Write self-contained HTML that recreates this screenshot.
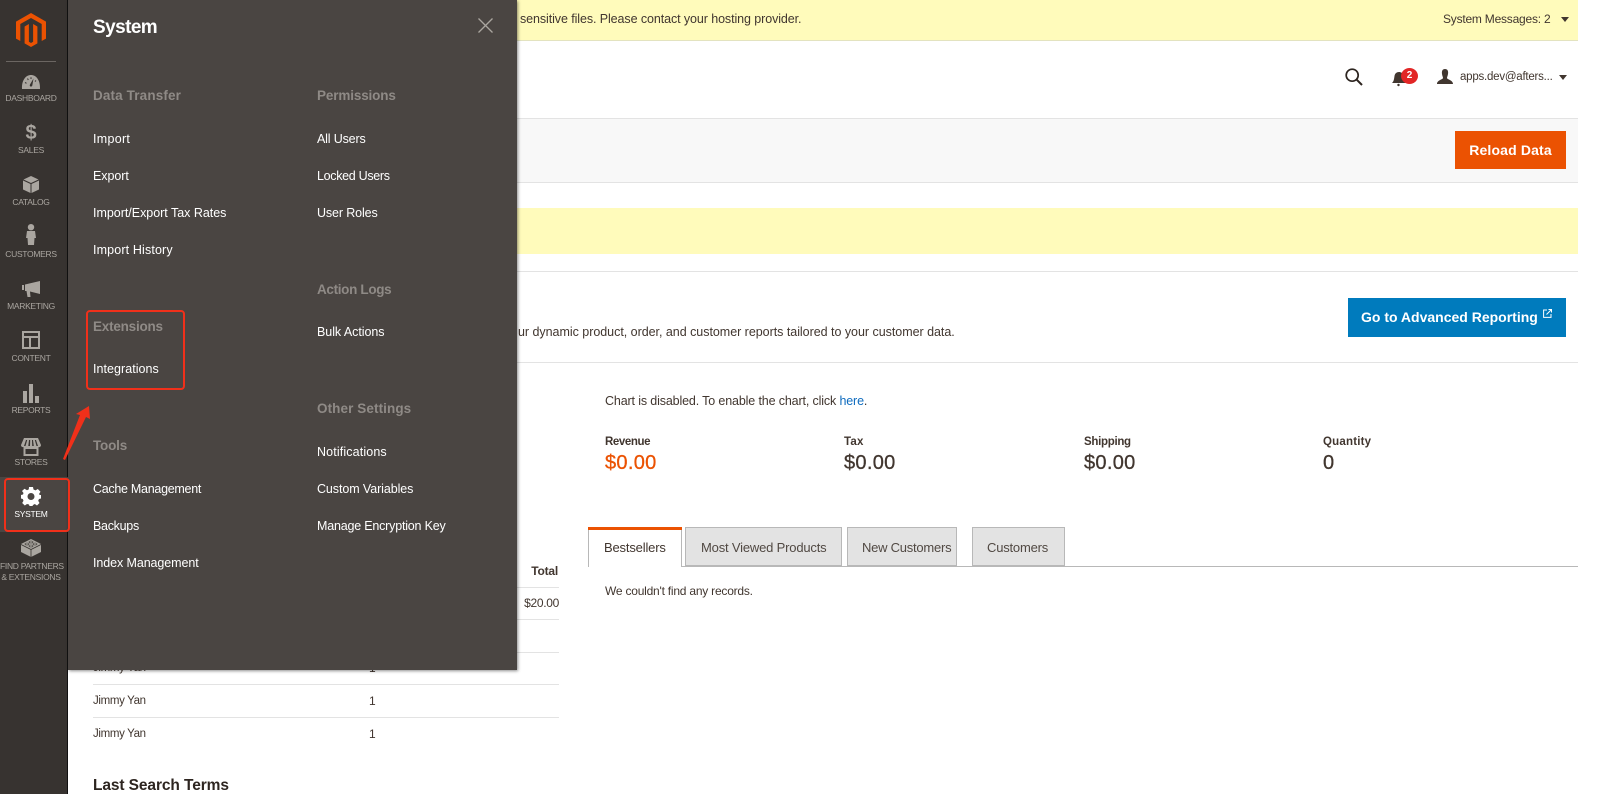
<!DOCTYPE html>
<html lang="en"><head><meta charset="utf-8"><title>Magento Admin</title>
<style>
html,body{margin:0;padding:0;background:#fff}
body{width:1600px;height:794px;overflow:hidden;position:relative;font-family:"Liberation Sans",sans-serif;color:#41362f}
.b{position:absolute}
.t{position:absolute;white-space:nowrap;line-height:0;font-size:12.5px;letter-spacing:.2px}
.n{font-size:8.5px;color:#aaa6a0;letter-spacing:-.3px;left:0;width:62px;text-align:center}
.m{font-size:12.5px;color:#fff}
.h{font-size:13.5px;font-weight:bold;color:#8f8a86}
.l{font-weight:bold;font-size:11.5px}
.v{font-size:20px;letter-spacing:.3px;-webkit-text-stroke:.3px currentColor}
.tab{position:absolute;top:527px;height:37px;background:#e3e3e3;border:1px solid #b8b8b8;border-bottom:2px solid #b8b8b8;box-sizing:content-box}
svg{position:absolute;overflow:visible}
.i{fill:#aaa6a0}
</style></head><body>

<!-- page -->
<div class="b" style="left:68px;top:0;width:1510px;height:40px;background:#fffbbb;border-bottom:1px solid #e3e3c0"></div>
<div class="t" style="left:520px;top:19px;letter-spacing:-.09px">sensitive files. Please contact your hosting provider.</div>
<div class="t" style="left:1443px;top:19px;font-size:12px;letter-spacing:-.22px">System Messages: 2</div>
<svg style="left:1561px;top:17px" width="8" height="5"><path d="M0 0H8L4 5Z" fill="#41362f"/></svg>

<svg style="left:1345px;top:68px" width="18" height="18" viewBox="0 0 18 18"><circle cx="7.2" cy="7.2" r="6" fill="none" stroke="#2d2520" stroke-width="1.7"/><path d="M11.6 11.6L17 17" stroke="#2d2520" stroke-width="2"/></svg>
<svg style="left:1392px;top:71px" width="14" height="15" viewBox="0 0 14 15"><path d="M0 12C2 10 2 8 2.500 5C3 2 5 1 7 1S11 2 11.500 5C12 8 12 10 14 12Z" fill="#41362f"/><circle cx="6.500" cy="14" r="1.200" fill="#41362f"/></svg>
<div class="b" style="left:1401px;top:68px;width:17px;height:16px;border-radius:50%;background:#e22626"></div>
<div class="t" style="left:1401px;width:17px;text-align:center;top:76px;font-size:10px;font-weight:bold;color:#fff;letter-spacing:0">2</div>
<svg style="left:1437px;top:69px" width="16" height="15" viewBox="0 0 16 15"><path d="M8 0C10.500 0 11.500 2 11 5C10.700 7 10 8 10 9C10 10.500 16 11 16 15H0C0 11 6 10.500 6 9C6 8 5.300 7 5 5C4.500 2 5.500 0 8 0Z" fill="#41362f"/></svg>
<div class="t" style="left:1460px;top:77px;letter-spacing:-.23px;font-size:11.500px">apps.dev@afters...</div>
<svg style="left:1559px;top:75px" width="8" height="5"><path d="M0 0H8L4 5Z" fill="#41362f"/></svg>

<div class="b" style="left:68px;top:118px;width:1510px;height:63px;background:#f8f8f8;border-top:1px solid #e3e3e3;border-bottom:1px solid #e3e3e3"></div>
<div class="b" style="left:1455px;top:131px;width:111px;height:38px;background:#eb5202"></div>
<div class="t" style="left:1455px;width:111px;text-align:center;top:150px;font-size:14px;font-weight:bold;color:#fff;letter-spacing:.15px">Reload Data</div>

<div class="b" style="left:68px;top:208px;width:1510px;height:46px;background:#fffbbb"></div>
<div class="b" style="left:68px;top:271px;width:1510px;height:1px;background:#e3e3e3"></div>
<div class="t" style="left:518px;top:332px;letter-spacing:-.03px">ur dynamic product, order, and customer reports tailored to your customer data.</div>
<div class="b" style="left:1348px;top:298px;width:218px;height:39px;background:#007bbd"></div>
<div class="t" style="left:1361px;top:317px;font-size:14px;font-weight:bold;color:#fff;letter-spacing:0">Go to Advanced Reporting</div>
<svg style="left:1543px;top:309px" width="9" height="9" viewBox="0 0 9 9"><path d="M4 1H.6V8.400H8V5M3.500 5.500L8.500.5M5.500.5H8.500V3.500" fill="none" stroke="#fff" stroke-width="1"/></svg>
<div class="b" style="left:68px;top:362px;width:1510px;height:1px;background:#e3e3e3"></div>

<div class="t" style="left:605px;top:401px;letter-spacing:-.14px">Chart is disabled. To enable the chart, click <span style="color:#0f6cbf">here</span>.</div>
<div class="t l" style="left:605px;top:442px;letter-spacing:-.4px">Revenue</div>
<div class="t l" style="left:844px;top:442px;letter-spacing:.2px">Tax</div>
<div class="t l" style="left:1084px;top:442px;letter-spacing:-.3px">Shipping</div>
<div class="t l" style="left:1323px;top:442px;letter-spacing:.2px">Quantity</div>
<div class="t v" style="left:605px;top:463px;color:#eb5202">$0.00</div>
<div class="t v" style="left:844px;top:463px;">$0.00</div>
<div class="t v" style="left:1084px;top:463px;">$0.00</div>
<div class="t v" style="left:1323px;top:463px;">0</div>

<div class="b" style="left:588px;top:566px;width:990px;height:1px;background:#b8b8b8"></div>
<div class="b" style="left:588px;top:527px;width:92px;height:40px;background:#fff;border-left:1px solid #b8b8b8;border-right:1px solid #b8b8b8;box-sizing:content-box"></div>
<div class="b" style="left:588px;top:527px;width:94px;height:3px;background:#eb5202"></div>
<div class="t" style="left:604px;top:548px;font-size:13px;letter-spacing:-.17px">Bestsellers</div>
<div class="tab" style="left:685px;width:155px"></div>
<div class="t" style="left:701px;top:548px;font-size:13px;color:#514943;letter-spacing:-.18px">Most Viewed Products</div>
<div class="tab" style="left:847px;width:108px"></div>
<div class="t" style="left:862px;top:548px;font-size:13px;color:#514943;letter-spacing:-.24px">New Customers</div>
<div class="tab" style="left:972px;width:91px"></div>
<div class="t" style="left:987px;top:548px;font-size:13px;color:#514943;letter-spacing:-.2px">Customers</div>
<div class="t" style="left:605px;top:591px;font-size:12px;letter-spacing:-.22px">We couldn't find any records.</div>

<div class="t" style="right:1042px;top:571px;font-size:12px;font-weight:bold;letter-spacing:-.2px">Total</div>
<div class="t" style="right:1041px;top:603px;font-size:12px;letter-spacing:-.3px">$20.00</div>
<div class="b" style="left:93px;top:587px;width:466px;height:1px;background:#e3e3e3"></div>
<div class="b" style="left:93px;top:619px;width:466px;height:1px;background:#e3e3e3"></div>
<div class="b" style="left:93px;top:652px;width:466px;height:1px;background:#e3e3e3"></div>
<div class="b" style="left:93px;top:684px;width:466px;height:1px;background:#e3e3e3"></div>
<div class="b" style="left:93px;top:717px;width:466px;height:1px;background:#e3e3e3"></div>
<div class="t" style="left:93px;top:668px;font-size:11.500px;letter-spacing:-.35px">Jimmy Yan</div>
<div class="t" style="left:369px;top:668px;font-size:12px;">1</div>
<div class="t" style="left:93px;top:701px;font-size:11.500px;letter-spacing:-.35px">Jimmy Yan</div>
<div class="t" style="left:369px;top:701px;font-size:12px;">1</div>
<div class="t" style="left:93px;top:734px;font-size:11.500px;letter-spacing:-.35px">Jimmy Yan</div>
<div class="t" style="left:369px;top:734px;font-size:12px;">1</div>
<div class="t" style="left:93px;top:786px;font-size:15.500px;font-weight:bold;color:#2d2520;letter-spacing:-.1px">Last Search Terms</div>

<!-- sidebar -->
<div class="b" style="left:0;top:0;width:68px;height:794px;background:#373330;border-right:1px solid #111;box-sizing:border-box"></div>
<svg style="left:16px;top:13px" width="30" height="34" viewBox="0 0 30 34"><path d="M15 0L30 8.600V25.600L25.700 28V11L15 5L4.300 11V28L0 25.600V8.600ZM17.100 28.800V11L21.400 13.500V30.400L15 34L8.600 30.400V13.500L12.900 11V28.800L15 30Z" fill="#eb5202"/></svg>
<div class="b" style="left:6px;top:61px;width:50px;height:1px;background:#6b6662"></div>

<svg style="left:22px;top:75px" width="18" height="14" viewBox="0 0 18 14"><path class="i" fill-rule="evenodd" d="M0 14C-.5 5 4 0 9 0S18.500 5 18 14ZM11.500 3.500L8 9.500C7 11.500 9.500 12.500 10.300 10.500Z"/><path d="M3 7.500L4.500 8.300M5.500 3.500L6.300 5M9 2.300V4M14 5.500L13 6.500" stroke="#373330" stroke-width="1"/></svg>
<div class="t n" style="top:98px;">DASHBOARD</div>
<div class="t n" style="top:133px;font-size:20px;font-weight:bold;color:#aaa6a0;letter-spacing:0">$</div>
<div class="t n" style="top:150px;">SALES</div>
<svg style="left:23px;top:176px" width="16" height="17" viewBox="0 0 16 17"><path class="i" d="M0 4.500L7.500 8V17L0 13.500ZM16 4.500L8.500 8V17L16 13.500ZM8 0L15.500 3.500L8 7L.5 3.500Z"/></svg>
<div class="t n" style="top:202px;">CATALOG</div>
<svg style="left:26px;top:224px" width="10" height="21" viewBox="0 0 10 21"><circle class="i" cx="5" cy="3.200" r="3.200"/><path class="i" d="M1 7H9L10 14H8.500L8 21H2L1.500 14H0Z"/></svg>
<div class="t n" style="top:254px;">CUSTOMERS</div>
<svg style="left:22px;top:281px" width="18" height="16" viewBox="0 0 18 16"><path class="i" d="M0 4H2V9H0ZM3 3.500L18 0V13L8 10.500L8.500 16H5.500L4.500 10H3Z"/></svg>
<div class="t n" style="top:306px;">MARKETING</div>
<svg style="left:22px;top:331px" width="18" height="18" viewBox="0 0 18 18"><path class="i" fill-rule="evenodd" d="M0 0H18V18H0ZM2 2V5H16V2ZM2 7V16H7V7ZM9 7V16H16V7Z"/></svg>
<div class="t n" style="top:358px;">CONTENT</div>
<svg style="left:23px;top:384px" width="16" height="19" viewBox="0 0 16 19"><path class="i" d="M0 7H4V19H0ZM6 0H10V19H6ZM12 12H16V19H12Z"/></svg>
<div class="t n" style="top:410px;">REPORTS</div>
<svg style="left:21px;top:438px" width="20" height="18" viewBox="0 0 20 18"><path class="i" fill-rule="evenodd" d="M3 0H17L20 7C20 9 18 9.500 17.500 9V18H2.500V9C2 9.500 0 9 0 7ZM5 2L3 8H4.500L6.200 2ZM8 2L7.300 8H9L9.200 2ZM11 2L11.200 8H12.800L12 2ZM13.800 2L15.500 8H17L15 2ZM4.500 11V16H15.500V11Z"/></svg>
<div class="t n" style="top:462px;">STORES</div>

<div class="b" style="left:0;top:477px;width:68px;height:55px;background:#4a4542"></div>
<svg style="left:21px;top:487px" width="20" height="19" viewBox="0 0 20 19"><path fill="#fff" fill-rule="evenodd" d="M8 0H12L12.500 2.500L14.500 3.400L16.800 2L19.500 4.800L18 7L18.800 8H20V11.500L18 12L17.200 13.800L18.500 16L16 18.500L13.800 17L12 18L11.500 19H8.500L8 17.500L6 17L3.800 18.500L1.200 16L2.500 13.800L1.800 12L0 11.500V8L2 7.500L2.500 6L1 4L3.500 1.800L6 3.200L7.800 2.400ZM10 6A3.500 3.500 0 1 0 10 13A3.500 3.500 0 1 0 10 6Z"/></svg>
<div class="t n" style="top:514px;color:#fff">SYSTEM</div>

<svg style="left:21px;top:539px" width="20" height="18" viewBox="0 0 20 18"><path class="i" d="M10 0L20 5V13L10 18L0 13V5Z"/><path d="M0 5.500L10 10.500L20 5.500M10 10.500V18" fill="none" stroke="#373330" stroke-width=".8"/><ellipse cx="6" cy="5" rx="2" ry="1" fill="none" stroke="#373330" stroke-width=".6"/><ellipse cx="14" cy="5" rx="2" ry="1" fill="none" stroke="#373330" stroke-width=".6"/><ellipse cx="10" cy="3" rx="2" ry="1" fill="none" stroke="#373330" stroke-width=".6"/><ellipse cx="10" cy="7" rx="2" ry="1" fill="none" stroke="#373330" stroke-width=".6"/></svg>
<div class="t n" style="top:566px;">FIND PARTNERS</div>
<div class="t n" style="top:577px;">&amp; EXTENSIONS</div>

<!-- menu panel -->
<div class="b" style="left:68px;top:0;width:449px;height:670px;background:#4a4542;box-shadow:1px 1px 3px rgba(0,0,0,.45)"></div>
<div class="t" style="left:93px;top:28px;font-size:19px;font-weight:bold;color:#fff;letter-spacing:-.58px">System</div>
<svg style="left:478px;top:18px" width="15" height="15" viewBox="0 0 15 15"><path d="M.5.5L14.500 14.500M14.500.5L.5 14.500" stroke="#aaa6a0" stroke-width="1.300"/></svg>

<div class="t h" style="left:93px;top:96px;letter-spacing:.13px">Data Transfer</div>
<div class="t m" style="left:93px;top:139px;letter-spacing:.29px">Import</div>
<div class="t m" style="left:93px;top:176px;letter-spacing:-.05px">Export</div>
<div class="t m" style="left:93px;top:213px;letter-spacing:-.02px">Import/Export Tax Rates</div>
<div class="t m" style="left:93px;top:250px;letter-spacing:.14px">Import History</div>
<div class="t h" style="left:93px;top:327px;letter-spacing:-.22px">Extensions</div>
<div class="t m" style="left:93px;top:369px;letter-spacing:.04px">Integrations</div>
<div class="t h" style="left:93px;top:446px;letter-spacing:-.2px">Tools</div>
<div class="t m" style="left:93px;top:489px;letter-spacing:-.28px">Cache Management</div>
<div class="t m" style="left:93px;top:526px;letter-spacing:-.29px">Backups</div>
<div class="t m" style="left:93px;top:563px;letter-spacing:-.09px">Index Management</div>

<div class="t h" style="left:317px;top:96px;letter-spacing:-.14px">Permissions</div>
<div class="t m" style="left:317px;top:139px;letter-spacing:-.16px">All Users</div>
<div class="t m" style="left:317px;top:176px;letter-spacing:-.31px">Locked Users</div>
<div class="t m" style="left:317px;top:213px;letter-spacing:-.12px">User Roles</div>
<div class="t h" style="left:317px;top:290px;letter-spacing:-.33px">Action Logs</div>
<div class="t m" style="left:317px;top:332px;letter-spacing:-.05px">Bulk Actions</div>
<div class="t h" style="left:317px;top:409px;letter-spacing:.09px">Other Settings</div>
<div class="t m" style="left:317px;top:452px;letter-spacing:.13px">Notifications</div>
<div class="t m" style="left:317px;top:489px;letter-spacing:-.09px">Custom Variables</div>
<div class="t m" style="left:317px;top:526px;letter-spacing:-.2px">Manage Encryption Key</div>

<!-- annotations -->
<div class="b" style="left:86px;top:310px;width:99px;height:80px;border:2px solid #f0301a;border-radius:4px;box-sizing:border-box"></div>
<div class="b" style="left:4px;top:478px;width:66px;height:54px;border:2px solid #f0301a;border-radius:4px;box-sizing:border-box"></div>
<svg style="left:0;top:0" width="120" height="480"><path d="M63 459L80 415L76 414L89 406L90 419L86 417L65 460Z" fill="#f0301a"/></svg>
</body></html>
